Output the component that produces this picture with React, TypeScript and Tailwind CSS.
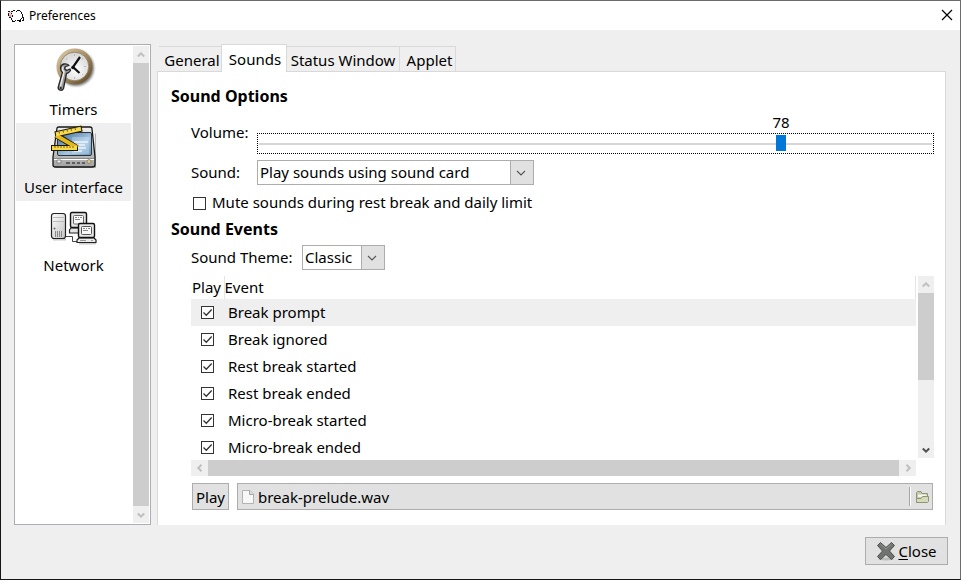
import { useState } from "react";
import type { ReactNode } from "react";

function SheepIcon() {
  return (
    <svg width="16" height="12" viewBox="0 0 16 12" className="shrink-0" shapeRendering="crispEdges" aria-hidden="true">
      <path d="M4 1H13V3H14V9H12V10H5V8H2V3H4Z" fill="#fff" />
      <path d="M1 2H4V7H1Z" fill="#f3c4c4" />
      <path d="M1 5H3V7H1Z" fill="#e09a9a" />
      <path
        d="M0 1H2V2H0ZM3 1H5V2H3ZM5 0H7V1H5ZM8 1H9V0H12V1H13V2H14V4H13V2H12V1H9V2H8ZM0 3H1V6H0ZM3 3H4V4H3ZM1 7H3V8H1ZM4 5H5V7H4ZM3 8H4V10H3ZM4 10H5V11H7V10H8V11H7V12H4ZM9 10H12V11H9ZM12 9H13V12H11V11H12ZM14 4H15V8H14ZM15 7H16V11H14V10H15ZM13 8H14V9H13Z"
        fill="#111"
      />
    </svg>
  );
}

function ClockIcon() {
  return (
    <svg width="48" height="48" viewBox="0 0 48 48" aria-hidden="true">
      <defs>
        <linearGradient id="rim" x1="0" y1="0" x2="1" y2="1">
          <stop offset="0" stopColor="#e2d3b4" />
          <stop offset=".5" stopColor="#a58d63" />
          <stop offset="1" stopColor="#54401f" />
        </linearGradient>
        <radialGradient id="face" cx=".55" cy=".6">
          <stop offset="0" stopColor="#fff" />
          <stop offset="1" stopColor="#dadada" />
        </radialGradient>
        <filter id="soft" x="-20%" y="-20%" width="140%" height="140%">
          <feGaussianBlur stdDeviation="1.300" />
        </filter>
      </defs>
      <circle cx="26" cy="21" r="18" fill="#000" opacity=".5" filter="url(#soft)" />
      <circle cx="24.500" cy="19.500" r="18" fill="url(#rim)" />
      <circle cx="24.500" cy="19.500" r="14.300" fill="url(#face)" stroke="#8a7650" strokeWidth=".8" />
      <path d="M24.500 7V9M24.500 30V32M36 19.500H34M16 11L17 12.500M33 28L32 27M33 11L32 12.500" stroke="#bbb" />
      <path d="M30 10L23 20L29.500 26" fill="none" stroke="#111" strokeWidth="2.200" />
      <circle cx="23" cy="20.500" r="1.800" fill="#111" />
      <path
        d="M14 17Q11 17.500 10.500 21Q10.500 24 12.500 25.500L8.500 39Q7.500 42 9.500 43Q12.500 44 13.500 41.500L16.500 26.500Q19 26 20.500 23.500L20 22L16.500 23.500L14.500 21.500L15.500 19.500L19 18.500Q17 16.500 14 17Z"
        fill="#9a9a9a"
        stroke="#262626"
        strokeWidth="1.300"
        strokeLinejoin="round"
      />
      <path d="M13 19.500L12.500 23L14 25L10.500 39" fill="none" stroke="#e9e9e9" strokeWidth="1.500" />
      <circle cx="10.800" cy="41" r="1" fill="#222" />
    </svg>
  );
}

function InterfaceIcon() {
  return (
    <svg width="48" height="48" viewBox="0 0 48 48" aria-hidden="true">
      <defs>
        <linearGradient id="screen" x1="0" y1="0" x2="1" y2="1">
          <stop offset="0" stopColor="#3d6c99" />
          <stop offset=".6" stopColor="#a3c6e3" />
          <stop offset="1" stopColor="#6797c2" />
        </linearGradient>
        <linearGradient id="case" x1="0" y1="0" x2="0" y2="1">
          <stop offset="0" stopColor="#efefef" />
          <stop offset="1" stopColor="#a4a4a4" />
        </linearGradient>
      </defs>
      <path d="M4 42H45V9L46 8V43H4Z" fill="#777" opacity=".5" />
      <path d="M7 3Q7 2 9 2H40Q42 2 42 4L45 32V40Q45 42 42 42H6Q3 42 3 40V32Z" fill="url(#case)" stroke="#171717" strokeWidth="1.300" />
      <rect x="7.500" y="7.500" width="34" height="23" rx="1.500" fill="url(#screen)" stroke="#333" />
      <path d="M24 17H38M24 20H35M24 23H36M24 26H32" stroke="#e5f1fa" strokeWidth="1.500" />
      <path d="M22 12H39V29H22Z" fill="#fff" opacity=".25" />
      <path d="M4 33.500H44" stroke="#888" />
      <path d="M4 34.500H44" stroke="#fff" />
      <path d="M7 35H11V38H7Z" fill="#eee" stroke="#777" strokeWidth=".8" />
      <path d="M16 38H20M22 38H25M27 38H30M32 38H35" stroke="#444" strokeWidth="1.500" />
      <circle cx="39" cy="36.500" r="2" fill="#e3c77f" stroke="#777" strokeWidth=".7" />
      <path d="M5 9.500L32 3.500" stroke="#1d1803" strokeWidth="6" />
      <path d="M6 10L27 23" stroke="#1d1803" strokeWidth="6" />
      <path d="M1 23H28" stroke="#1d1803" strokeWidth="6" />
      <path d="M6 10.500L27 22.500" stroke="#e5b81d" strokeWidth="4" />
      <path d="M6 9.300L31 3.700" stroke="#f6d94d" strokeWidth="4" />
      <path d="M2 23H27" stroke="#f6d94d" strokeWidth="4" />
      <path d="M5 21V23M8 21V23M11 21V23M14 21V23M17 21V23M20 21V23M23 21V23M9 6.500L9.500 8.500M13 5.600L13.500 7.600M17 4.700L17.500 6.700M21 3.800L21.500 5.800M25 3L25.500 5" stroke="#80640c" />
    </svg>
  );
}

function NetworkIcon() {
  return (
    <svg width="48" height="48" viewBox="0 0 48 48" aria-hidden="true">
      <defs>
        <linearGradient id="tower" x1="0" y1="0" x2="1" y2="1">
          <stop offset="0" stopColor="#fff" />
          <stop offset="1" stopColor="#c2c2c2" />
        </linearGradient>
      </defs>
      <path d="M3 36.500H16M29 40.500H46" stroke="#ccc" strokeWidth="2" />
      <path d="M16 33.500H22.500V38.500H27" fill="none" stroke="#444" />
      <rect x="1.500" y="10.500" width="14" height="25" rx="2.500" fill="url(#tower)" stroke="#222" strokeWidth="1.200" />
      <path d="M3 14.500H14M3 18.500H14" stroke="#bbb" />
      <path d="M5.500 28V34M7.500 28V34M9.500 28V34M11.500 28V34" stroke="#8a8a8a" />
      <circle cx="4.500" cy="25.500" r="1" fill="#666" />
      <path d="M21 25H36L38 27V30H19.500V27Z" fill="#e4e4e4" stroke="#222" strokeWidth="1.200" />
      <rect x="20.500" y="9.500" width="16" height="15" rx="1.500" fill="#e4e4e4" stroke="#111" strokeWidth="1.400" />
      <rect x="23.500" y="12.500" width="10" height="8.500" rx="1" fill="#fafafa" stroke="#666" />
      <path d="M25 14.500H27M28 14.500H29M30 14.500H32M25 16.500H30" stroke="#888" />
      <path d="M29 35H44L46 37V39.500H27V37Z" fill="#ececec" stroke="#222" strokeWidth="1.200" strokeLinejoin="round" />
      <rect x="28.500" y="20.500" width="16" height="14" rx="1.500" fill="#e8e8e8" stroke="#111" strokeWidth="1.400" />
      <rect x="31.500" y="23.500" width="10" height="8" rx="1" fill="#fafafa" stroke="#555" />
      <path d="M33 25.500H35M36 25.500H37M38 25.500H40M33 27.500H38" stroke="#888" />
      <path d="M30 37.500H36M41 37.500H43" stroke="#999" />
    </svg>
  );
}

function Chevron({ turn = "", colour = "text-[#bfbfbf]" }: { turn?: string; colour?: string }) {
  return (
    <svg width="8" height="8" viewBox="0 0 8 8" className={`${turn} ${colour}`} aria-hidden="true">
      <path d="M.8 5.500L4 2.300L7.200 5.500" fill="none" stroke="currentColor" strokeWidth="2" />
    </svg>
  );
}

function ScrollButton({ label, turn, colour }: { label: string; turn?: string; colour?: string }) {
  return (
    <button type="button" aria-label={label} className="flex size-[17px] shrink-0 items-center justify-center">
      <Chevron turn={turn} colour={colour} />
    </button>
  );
}

function Combo({ id, options, width }: { id: string; options: string[]; width: string }) {
  return (
    <div className={`relative h-[25px] ${width}`}>
      <select id={id} className="block h-full w-full appearance-none border border-[#adadad] bg-white pr-6 pb-0.5 pl-0.5 outline-none">
        {options.map((option) => (
          <option key={option}>{option}</option>
        ))}
      </select>
      <span className="pointer-events-none absolute inset-y-0 right-0 flex w-6 items-center justify-center border border-[#adadad] bg-[#e1e1e1] pr-0.5">
        <svg width="10" height="6" viewBox="0 0 10 6" aria-hidden="true">
          <path d="M1 1L5 5L9 1" fill="none" stroke="#555" strokeWidth="1.100" />
        </svg>
      </span>
    </div>
  );
}

function Check({ id, label, defaultChecked }: { id: string; label?: string; defaultChecked?: boolean }) {
  return (
    <span className="relative block size-[13px] shrink-0">
      <input
        id={id}
        type="checkbox"
        aria-label={label}
        defaultChecked={defaultChecked}
        className="peer block size-[13px] appearance-none border border-[#333] bg-white"
      />
      <svg viewBox="0 0 13 13" className="pointer-events-none absolute inset-0 hidden peer-checked:block" aria-hidden="true">
        <path d="M2.500 6.500L5.300 9.300L10.700 3.500" fill="none" stroke="#333" strokeWidth="1.300" />
      </svg>
    </span>
  );
}

const sections: { name: string; icon: ReactNode }[] = [
  { name: "Timers", icon: <ClockIcon /> },
  { name: "User interface", icon: <InterfaceIcon /> },
  { name: "Network", icon: <NetworkIcon /> },
];

const events = [
  "Break prompt",
  "Break ignored",
  "Rest break started",
  "Rest break ended",
  "Micro-break started",
  "Micro-break ended",
];

export default function App() {
  const [volume, setVolume] = useState(78);

  return (
    <div className="flex h-screen flex-col border border-t-[#6b6b6b] border-r-[#6b6b6b] border-b-[#151515] border-l-[#151515] bg-[#efefef] font-['Noto_Sans',sans-serif] text-[15px] leading-5 text-black">
      <header className="flex h-[29px] shrink-0 items-center bg-white pr-[7px] pl-[7px]">
        <SheepIcon />
        <h1 className="ml-[5px] text-[12px]">Preferences</h1>
        <button type="button" aria-label="Close window" className="ml-auto flex size-3 items-center justify-center pb-0.5">
          <svg width="12" height="12" viewBox="0 0 12 12" className="shrink-0" aria-hidden="true">
            <path d="M1 1L11 11M11 1L1 11" stroke="#000" strokeWidth="1.200" />
          </svg>
        </button>
      </header>

      <main className="flex min-h-0 flex-1 gap-1.5 pt-3.5 pr-3.5 pl-[13px]">
        <nav className="flex w-[137px] shrink-0 border border-[#adadb5] bg-white">
          <ul className="min-w-0 flex-1 pr-0.5 pl-px">
            {sections.map((section) => (
              <li key={section.name}>
                <button
                  type="button"
                  aria-current={section.name === "User interface" ? "page" : undefined}
                  className="flex h-[78px] w-full flex-col items-center gap-1 pt-0.5 aria-[current=page]:bg-[#efefef]"
                >
                  {section.icon}
                  <span className="whitespace-nowrap">{section.name}</span>
                </button>
              </li>
            ))}
          </ul>
          <div className="my-px mr-px flex w-4 flex-col items-center bg-[#efefef]">
            <ScrollButton label="Scroll up" />
            <div className="w-full flex-1 bg-[#cdcdcd]" />
            <ScrollButton label="Scroll down" turn="rotate-180" />
          </div>
        </nav>

        <div className="flex min-w-0 flex-1 flex-col">
          <div role="tablist" className="z-10 -mb-px flex h-7 shrink-0 items-end pl-0.5">
            <button type="button" role="tab" aria-selected="false" className="mb-px h-[25px] w-[62px] border-t border-[#d9d9d9] pt-0.5 pl-1">
              General
            </button>
            <button type="button" role="tab" aria-selected="true" className="h-7 w-[66px] border border-b-0 border-[#d9d9d9] bg-white pl-0.5">
              Sounds
            </button>
            <button type="button" role="tab" aria-selected="false" className="mb-px h-[25px] w-[113px] border-t border-r border-[#d9d9d9] pt-0.5 whitespace-nowrap">
              Status Window
            </button>
            <button type="button" role="tab" aria-selected="false" className="mb-px h-[25px] w-14 border-t border-r border-[#d9d9d9] pt-0.5 pl-1">
              Applet
            </button>
          </div>

          <section role="tabpanel" className="flex min-h-0 flex-1 flex-col border border-b-0 border-[#d9d9d9] bg-white pt-[13px] pr-[11px] pb-[15px] pl-[13px]">
            <h2 className="h-6 shrink-0 text-[16px] leading-[22px] font-bold">Sound Options</h2>
            <div className="mt-[3px] flex shrink-0 items-center pl-5">
              <label htmlFor="volume" className="w-[66px] pb-0.5">
                Volume:
              </label>
              <div className="min-w-0 flex-1">
                <div className="mx-[7px] h-[21px]">
                  <output htmlFor="volume" className="relative inline-block -translate-x-1/2 leading-[18px]" style={{ left: `${volume}%` }}>
                    {volume}
                  </output>
                </div>
                <div className="h-[21px] border border-dotted border-black px-px">
                  <input
                    id="volume"
                    type="range"
                    min="0"
                    max="100"
                    value={volume}
                    onChange={(e) => setVolume(Number(e.target.value))}
                    className="block h-[19px] w-full appearance-none bg-transparent outline-none [&::-webkit-slider-runnable-track]:h-0.5 [&::-webkit-slider-runnable-track]:bg-[#d6d6d6] [&::-webkit-slider-thumb]:-mt-2 [&::-webkit-slider-thumb]:h-4 [&::-webkit-slider-thumb]:w-2.5 [&::-webkit-slider-thumb]:appearance-none [&::-webkit-slider-thumb]:bg-[#0078d7]"
                  />
                </div>
              </div>
            </div>
            <div className="mt-1.5 flex shrink-0 items-center pl-5">
              <label htmlFor="device" className="w-[66px] pb-0.5">
                Sound:
              </label>
              <Combo id="device" options={["Play sounds using sound card", "No sounds"]} width="w-[277px]" />
            </div>
            <div className="mt-[7px] flex shrink-0 items-center gap-1.5 pl-[22px]">
              <Check id="mute" />
              <label htmlFor="mute" className="pb-0.5">
                Mute sounds during rest break and daily limit
              </label>
            </div>
            <h2 className="mt-1 h-6 shrink-0 text-[16px] leading-[22px] font-bold">Sound Events</h2>
            <div className="mt-[3px] flex shrink-0 items-center pl-5">
              <label htmlFor="theme" className="w-[111px] pb-0.5">
                Sound Theme:
              </label>
              <Combo id="theme" options={["Classic", "Default"]} width="w-[83px]" />
            </div>

            <div className="mt-1.5 grid min-h-0 flex-1 grid-cols-[1fr_16px] grid-rows-[1fr_16px] gap-0.5 pl-5">
              <div className="min-h-0 overflow-hidden">
                <table className="w-full table-fixed border-collapse text-left">
                  <thead>
                    <tr className="h-[23px]">
                      <th className="w-[33px] border-r border-[#e5e5e5] p-0 pb-0.5 pl-px font-normal">Play</th>
                      <th className="border-r border-[#e5e5e5] p-0 pb-0.5 font-normal">Event</th>
                    </tr>
                  </thead>
                  <tbody>
                    {events.map((event, i) => (
                      <tr key={event} className="h-[27px] first:bg-[#efefef]">
                        <td className="p-0 pl-2.5">
                          <Check id={`event-${i}`} label={`Play sound for ${event}`} defaultChecked />
                        </td>
                        <td className="p-0 pb-0.5 pl-1">{event}</td>
                      </tr>
                    ))}
                  </tbody>
                </table>
              </div>
              <div className="flex min-h-0 flex-col items-center bg-[#efefef]">
                <ScrollButton label="Scroll events up" />
                <div className="flex w-full flex-1 flex-col">
                  <div className="h-[59%] bg-[#cdcdcd]" />
                </div>
                <ScrollButton label="Scroll events down" turn="rotate-180" colour="text-[#505050]" />
              </div>
              <div className="flex items-center bg-[#efefef]">
                <ScrollButton label="Scroll events left" turn="-rotate-90" />
                <div className="h-full flex-1 bg-[#cdcdcd]" />
                <ScrollButton label="Scroll events right" turn="rotate-90" />
              </div>
            </div>

            <div className="mt-[7px] flex h-[27px] shrink-0 gap-2 pr-px pl-[21px]">
              <button type="button" className="w-[37px] border border-[#adadad] bg-[#e1e1e1]">
                Play
              </button>
              <button type="button" className="flex min-w-0 flex-1 items-center border border-[#adadad] bg-[#e1e1e1] pr-[3px] pl-1">
                <svg width="12" height="14" viewBox="0 0 12 14" aria-hidden="true">
                  <path d="M.5 .5H8L11.500 4V13.500H.5Z" fill="#f7f7f7" stroke="#b3b3b3" />
                  <path d="M7.500 .5V4.500H11.500" fill="#ddd" stroke="#a5a5a5" />
                </svg>
                <span className="ml-1">break-prelude.wav</span>
                <span className="ml-auto h-[19px] w-0.5 border-r border-l border-r-white border-l-[#a5a5a5]" />
                <svg width="14" height="12" viewBox="0 0 14 12" className="ml-1" aria-hidden="true">
                  <path d="M1.500 11.500V1.500L2.500 .5H6L7 2.500H12.500V6" fill="#c5c9ab" stroke="#8f9475" />
                  <path d="M3 3.500H11.500V6H3Z" fill="#f4f5e9" />
                  <path d="M1.500 11.500V7.500H6L7.500 5.500H13.500V10.500L12.500 11.500Z" fill="#d6dab9" stroke="#8f9475" />
                </svg>
              </button>
            </div>
          </section>
        </div>
      </main>

      <footer className="flex shrink-0 justify-end pt-3 pr-3 pb-3.5">
        <button type="button" className="flex h-7 w-[83px] items-center justify-center gap-0.5 border border-[#adadad] bg-[#e1e1e1]">
          <svg width="20" height="20" viewBox="0 0 20 20" aria-hidden="true">
            <ellipse cx="10" cy="18" rx="8" ry="1.500" fill="#bbb" />
            <path
              d="M4.500 1.500L10 6.500L15.500 1.500L18.500 4.500L13.500 10L18.500 15.500L15.500 18.500L10 13.500L4.500 18.500L1.500 15.500L6.500 10L1.500 4.500Z"
              fill="#71736f"
              stroke="#4c4e4a"
              strokeLinejoin="round"
            />
            <path d="M4.500 3L10 8L15.500 3" fill="none" stroke="#92948f" />
          </svg>
          <span>
            <span className="underline underline-offset-2">C</span>lose
          </span>
        </button>
      </footer>
    </div>
  );
}
